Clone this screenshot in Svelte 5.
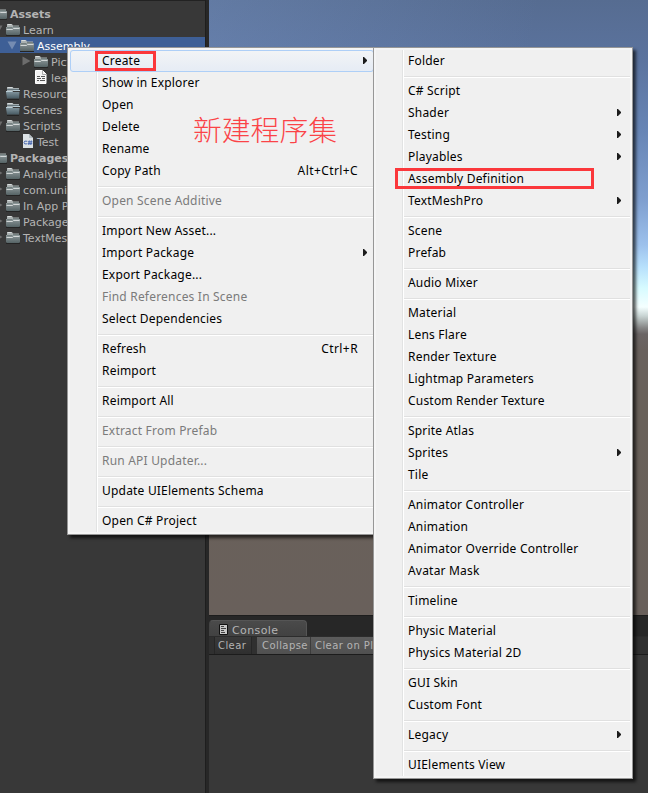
<script>
  const tree = [
    { text: 'Assets', pad: -9, icon: 'folder', bold: true },
    { text: 'Learn', pad: 4, icon: 'folder', arrow: 'down' },
    { text: 'Assembly', pad: 18, icon: 'folder', arrow: 'down', selected: true },
    { text: 'Picture', pad: 32, icon: 'folder', arrow: 'right' },
    { text: 'learn', pad: 32, icon: 'file' },
    { text: 'Resources', pad: 4, icon: 'full' },
    { text: 'Scenes', pad: 4, icon: 'full' },
    { text: 'Scripts', pad: 4, icon: 'folder', arrow: 'down' },
    { text: 'Test', pad: 18, icon: 'cs' },
    { text: 'Packages', pad: -9, icon: 'folder', bold: true },
    { text: 'Analytics', pad: 4, icon: 'folder', arrow: 'right' },
    { text: 'com.unity', pad: 4, icon: 'folder', arrow: 'right' },
    { text: 'In App Purchasing', pad: 4, icon: 'folder', arrow: 'right' },
    { text: 'Package Manager', pad: 4, icon: 'folder', arrow: 'right' },
    { text: 'TextMesh Pro', pad: 4, icon: 'folder', arrow: 'right' }
  ];

  const context = [
    [{ text: 'Create', sub: true, hot: true, mark: true }, { text: 'Show in Explorer' }, { text: 'Open' }, { text: 'Delete' }, { text: 'Rename' }, { text: 'Copy Path', key: 'Alt+Ctrl+C' }],
    [{ text: 'Open Scene Additive', off: true }],
    [{ text: 'Import New Asset...' }, { text: 'Import Package', sub: true }, { text: 'Export Package...' }, { text: 'Find References In Scene', off: true }, { text: 'Select Dependencies' }],
    [{ text: 'Refresh', key: 'Ctrl+R' }, { text: 'Reimport' }],
    [{ text: 'Reimport All' }],
    [{ text: 'Extract From Prefab', off: true }],
    [{ text: 'Run API Updater...', off: true }],
    [{ text: 'Update UIElements Schema' }],
    [{ text: 'Open C# Project' }]
  ];

  const create = [
    [{ text: 'Folder' }],
    [{ text: 'C# Script' }, { text: 'Shader', sub: true }, { text: 'Testing', sub: true }, { text: 'Playables', sub: true }, { text: 'Assembly Definition', mark: true }, { text: 'TextMeshPro', sub: true }],
    [{ text: 'Scene' }, { text: 'Prefab' }],
    [{ text: 'Audio Mixer' }],
    [{ text: 'Material' }, { text: 'Lens Flare' }, { text: 'Render Texture' }, { text: 'Lightmap Parameters' }, { text: 'Custom Render Texture' }],
    [{ text: 'Sprite Atlas' }, { text: 'Sprites', sub: true }, { text: 'Tile' }],
    [{ text: 'Animator Controller' }, { text: 'Animation' }, { text: 'Animator Override Controller' }, { text: 'Avatar Mask' }],
    [{ text: 'Timeline' }],
    [{ text: 'Physic Material' }, { text: 'Physics Material 2D' }],
    [{ text: 'GUI Skin' }, { text: 'Custom Font' }],
    [{ text: 'Legacy', sub: true }],
    [{ text: 'UIElements View' }]
  ];
</script>

{#snippet menu(groups, kind)}
  <div class="menu {kind}">
    {#each groups as group}
      <div class="group">
        {#each group as item}
          <div class="item" class:hot={item.hot} class:off={item.off}>
            <span class="label">{item.text}</span>
            {#if item.key}<span class="key">{item.key}</span>{/if}
            {#if item.sub}
              <svg class="sub" width="4" height="7" viewBox="0 0 4 7"><path d="M0 0h1l3 3v1L1 7H0z" fill="#1c1c1c" /></svg>
            {/if}
            {#if item.mark}<i class="mark"></i>{/if}
          </div>
        {/each}
      </div>
    {/each}
  </div>
{/snippet}

<div class="editor">
  <div class="tree">
    {#each tree as row}
      <div class="row" class:selected={row.selected} class:bold={row.bold}>
        <span class="indent" style="margin-left: {row.pad - 14}px">
          {#if row.arrow === 'down'}
            <svg width="10" height="9" viewBox="0 0 10 9"><path d="M.5 .5h9L5 8.5z" fill={row.selected ? '#758cb2' : '#6c6c6c'} /></svg>
          {:else if row.arrow === 'right'}
            <svg width="9" height="10" viewBox="0 0 9 10"><path d="M.5 .5v9L8.5 5z" fill="#6c6c6c" /></svg>
          {/if}
        </span>
        {#if row.icon === 'folder' || row.icon === 'full'}
          <svg class="icon" width="16" height="16" viewBox="0 0 16 16">
            <defs>
              <linearGradient id="fold" x1="0" y1="0" x2="0" y2="1"><stop offset="0" stop-color="#8d9899" /><stop offset="1" stop-color="#556365" /></linearGradient>
              <linearGradient id="full" x1="0" y1="0" x2="0" y2="1"><stop offset="0" stop-color="#7f929b" /><stop offset="1" stop-color="#475a63" /></linearGradient>
            </defs>
            {#if row.icon === 'folder'}
              <path d="M1 14.500h14" stroke="#242424" />
              <path d="M2 5V3.500l.5-.5h4.500l1 1.500H14V8H2z" fill="#aab1b1" />
              <path d="M2.500 3.500h4" stroke="#d9dddd" />
              <path d="M1 6h14v7l-1 1H2l-1-1z" fill="url(#fold)" />
              <path d="M1.500 8.500h6l1-1H14.500" fill="none" stroke="#dce0e0" stroke-width=".9" />
              <path d="M2 6.500h5M8 5.500h6" stroke="#758080" />
            {:else}
              <path d="M2 14.500h12" stroke="#242424" />
              <path d="M2 6V2.500l.5-.5h5l1 1H14V6z" fill="#a4adb0" />
              <path d="M2.500 2.500h5" stroke="#d5dbdd" />
              <path d="M2 4.500h12" stroke="#66757c" />
              <path d="M1 7h13.500l-.5 6.500H2z" fill="url(#full)" />
              <path d="M1 6.500h6.500l1-1H15" fill="none" stroke="#b9cdd6" />
            {/if}
          </svg>
        {:else if row.icon === 'file'}
          <svg class="icon" width="16" height="16" viewBox="0 0 16 16">
            <path d="M2.500 1.500h7l3.500 3.500v9.500H2.500z" fill="#f3f3f3" stroke="#fff" />
            <path d="M9.500 1v4.500h4" fill="none" stroke="#aaa" />
            <path d="M4 7.500h3m1 0h4M4 9.500h4m1 0h3M4 11.500h2m1 0h5" stroke="#555" />
          </svg>
        {:else}
          <svg class="icon" width="16" height="16" viewBox="0 0 16 16">
            <path d="M4 1h6l4 4v10H4z" fill="#dce2e5" />
            <path d="M10 1v4h4" fill="#b4bec4" />
            <path d="M8.300 8.300Q5 7.300 5 9.500t3.300 1.300M10.300 7.500l-.5 4.500M12.300 7.500l-.5 4.500M9 8.800h4.500M8.800 10.600h4.500" fill="none" stroke="#4a69b1" />
          </svg>
        {/if}
        <span class="name">{row.text}</span>
      </div>
    {/each}
  </div>
  <div class="gutter"></div>
  <div class="right">
    <div class="scene"></div>
    <div class="tabs">
      <div class="tab">
        <svg width="9" height="11" viewBox="0 0 9 11"><path d="M.5 .5h8v10h-8z" fill="#c8c8c8" stroke="#111" /><path d="M2 2.500h3M2 4.500h5M2 6.500h3M2 8.500h4" stroke="#444" /></svg>
        <span>Console</span>
      </div>
    </div>
    <div class="toolbar">
      <span class="btn clear">Clear</span>
      <span class="btn collapse">Collapse</span>
      <span class="btn play">Clear on Play</span>
    </div>
    <div class="log"></div>
  </div>

  {@render menu(context, 'context')}
  {@render menu(create, 'create')}
  <div class="note">新建程序集</div>
</div>

<style>
  .editor {
    position: relative;
    display: grid;
    grid-template-columns: 205px 4px 1fr;
    width: 648px;
    height: 793px;
    overflow: hidden;
    background: #383838;
    font-family: 'DejaVu Sans', sans-serif;
    font-size: 11px;
    color: #b4b4b4;
  }
  .tree {
    padding-top: 4px;
    border-top: 1px solid #222;
    overflow: hidden;
  }
  .row {
    display: flex;
    align-items: center;
    height: 16px;
    white-space: nowrap;
  }
  .row.selected {
    background: #3e5f96;
    color: #fff;
  }
  .row.bold {
    font-weight: bold;
  }
  .indent {
    flex: none;
    display: flex;
    align-items: center;
    justify-content: center;
    width: 16px;
    margin-right: -1px;
  }
  .icon {
    flex: none;
  }
  .name {
    margin-left: 2px;
    padding-top: 4px;
    line-height: 14px;
  }
  .gutter {
    background: #272727;
    border-left: 1px solid #1e1e1e;
    box-sizing: border-box;
  }
  .right {
    display: flex;
    flex-direction: column;
    min-width: 0;
  }
  .scene {
    height: 615px;
    border-bottom: 1px solid #1d1d1d;
    background:
      linear-gradient(100deg, rgba(130, 160, 210, 0.28), rgba(130, 160, 210, 0) 70%) 0 0 / 100% 200px no-repeat,
      linear-gradient(#566c91 0, #5b739e 60px, #6785b5 130px, #7f9fcf 200px, #9dc1ec 245px, #b7e0fc 267px, #d7fbff 288px, #f4ffff 307px, #c8d4d3 316px, #858585 328px, #6b6565 334px, #69615d 350px, #69615a 410px, #69605b 100%);
  }
  .tabs {
    height: 20px;
    padding-top: 4px;
    box-sizing: border-box;
    background: #272727;
  }
  .tab {
    display: flex;
    align-items: center;
    gap: 4px;
    width: 98px;
    height: 17px;
    padding-left: 9px;
    box-sizing: border-box;
    border: 1px solid #555;
    border-bottom: 0;
    border-left-color: #444;
    border-radius: 4px 4px 0 0;
    background: linear-gradient(#4a4a4a, #414141);
    letter-spacing: 0.4px;
  }
  .tab span {
    padding-top: 2px;
  }
  .toolbar {
    display: flex;
    height: 19px;
    padding-left: 5px;
    box-sizing: border-box;
    background: #303030;
    border-top: 1px solid #2c2c2c;
    border-bottom: 1px solid #1c1c1c;
    font-size: 10px;
    line-height: 18px;
    letter-spacing: 0.42px;
    white-space: nowrap;
    overflow: hidden;
  }
  .btn {
    box-sizing: border-box;
    padding-left: 5px;
    flex: none;
  }
  .clear {
    width: 38px;
    padding-left: 3px;
    margin-right: 5px;
    border-left: 1px solid #262626;
    border-right: 1px solid #262626;
    background: linear-gradient(#3a3a3a, #2f2f2f);
  }
  .collapse {
    width: 54px;
  }
  .collapse,
  .play {
    background: linear-gradient(#5c5c5c, #505050);
    border-right: 1px solid #3c3c3c;
  }
  .play {
    width: 90px;
    padding-left: 4px;
  }
  .log {
    flex: 1;
    background: #383838;
  }

  .menu {
    position: absolute;
    top: 47px;
    box-sizing: border-box;
    padding: 2px;
    border: 1px solid #979797;
    background: linear-gradient(90deg, #f0f0f0 26px, #e2e3e3 26px, #e2e3e3 27px, #fff 27px, #fff 28px, #f0f0f0 28px) no-repeat content-box, #f5f5f5;
    box-shadow: 3px 3px 3px rgba(0, 0, 0, 0.65);
    font-family: 'Noto Sans', sans-serif;
    font-size: 12px;
    letter-spacing: 0.2px;
    color: #000;
  }
  .context {
    left: 67px;
    width: 310px;
  }
  .create {
    left: 373px;
    width: 260px;
  }
  .group + .group {
    padding-top: 8px;
    background: linear-gradient(transparent 4px, #e0e0e0 4px, #e0e0e0 5px, #fff 5px, #fff 6px, transparent 6px) 28px 0 no-repeat;
  }
  .item {
    position: relative;
    display: flex;
    align-items: center;
    height: 22px;
    padding-left: 32px;
    box-sizing: border-box;
    white-space: nowrap;
  }
  .label,
  .key {
    padding-bottom: 2px;
  }
  .item.off {
    color: #7b7b7b;
  }
  .item.hot {
    border: 1px solid #aecff7;
    border-radius: 3px;
    padding-left: 31px;
    background: linear-gradient(#f2f4f6, #e6ecf5);
  }
  .key {
    margin-left: auto;
    margin-right: 16px;
  }
  .context .key {
    letter-spacing: 0.4px;
  }
  .sub {
    margin-left: auto;
    margin-right: 9px;
    margin-bottom: 1px;
  }
  .context .sub {
    margin-right: 7px;
  }
  .context .hot .sub {
    margin-right: 6px;
  }
  .mark {
    position: absolute;
    border: 3px solid #fb373b;
    box-sizing: border-box;
  }
  .context .mark {
    left: 24px;
    top: 0;
    width: 61px;
    height: 20px;
  }
  .create .mark {
    left: 19px;
    top: 0;
    width: 199px;
    height: 21px;
  }
  .note {
    position: absolute;
    left: 193px;
    top: 109px;
    font: 300 28.8px/40px 'Noto Sans CJK SC', sans-serif;
    color: #fb4347;
    white-space: nowrap;
  }
</style>
